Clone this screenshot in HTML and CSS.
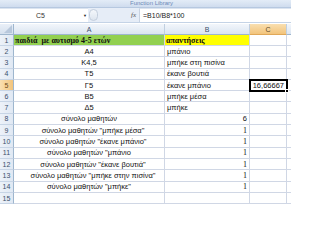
FILE: index.html
```html
<!DOCTYPE html>
<html>
<head>
<meta charset="utf-8">
<link rel="stylesheet" href="styles.css">
</head>
<body>
<div class="app">
  <div class="ribbon"><span class="group-label">Function Library</span></div>
  <div class="fbar">
    <div class="namebox"><span class="name">C5</span><span class="drop">&#9660;</span></div>
    <div class="grip"></div>
    <div class="fx">fx</div>
    <div class="formula">=B10/B8*100</div>
  </div>
  <div class="sheet">
    <div class="corner"><svg width="9" height="8" viewBox="0 0 9 8"><path d="M9 0 L9 8 L1 8 Z" fill="#b8c8dc"/></svg></div>
    <div class="ch">A</div>
    <div class="ch">B</div>
    <div class="ch sel">C</div>
    <div class="ch last"></div>

    <div class="rh">1</div>
    <div class="c green bold">παιδιά&nbsp; με αυτισμό 4-5 ετών</div>
    <div class="c yellow bold">απαντήσεις</div>
    <div class="c"></div>
    <div class="c"></div>

    <div class="rh">2</div>
    <div class="c mid">A4</div>
    <div class="c">μπάνιο</div>
    <div class="c"></div>
    <div class="c"></div>

    <div class="rh">3</div>
    <div class="c mid">K4,5</div>
    <div class="c">μπήκε στη πισίνα</div>
    <div class="c"></div>
    <div class="c"></div>

    <div class="rh">4</div>
    <div class="c mid">T5</div>
    <div class="c">έκανε βουτιά</div>
    <div class="c"></div>
    <div class="c"></div>

    <div class="rh sel">5</div>
    <div class="c mid">Γ5</div>
    <div class="c">έκανε μπάνιο</div>
    <div class="c right active">16,66667<span class="handle"></span></div>
    <div class="c"></div>

    <div class="rh">6</div>
    <div class="c mid">B5</div>
    <div class="c">μπήκε μέσα</div>
    <div class="c"></div>
    <div class="c"></div>

    <div class="rh">7</div>
    <div class="c mid">Δ5</div>
    <div class="c">μπήκε</div>
    <div class="c"></div>
    <div class="c"></div>

    <div class="rh">8</div>
    <div class="c mid">σύνολο μαθητών</div>
    <div class="c right">6</div>
    <div class="c"></div>
    <div class="c"></div>

    <div class="rh">9</div>
    <div class="c mid shift">σύνολο μαθητών "μπήκε μέσα"</div>
    <div class="c right serif">1</div>
    <div class="c"></div>
    <div class="c"></div>

    <div class="rh">10</div>
    <div class="c mid shift">σύνολο μαθητών "έκανε μπάνιο"</div>
    <div class="c right serif">1</div>
    <div class="c"></div>
    <div class="c"></div>

    <div class="rh">11</div>
    <div class="c mid">σύνολο μαθητών "μπάνιο</div>
    <div class="c right serif">1</div>
    <div class="c"></div>
    <div class="c"></div>

    <div class="rh">12</div>
    <div class="c mid shift">σύνολο μαθητών "έκανε βουτιά"</div>
    <div class="c right serif">1</div>
    <div class="c"></div>
    <div class="c"></div>

    <div class="rh">13</div>
    <div class="c mid shift">σύνολο μαθητών "μπήκε στην πισίνα"</div>
    <div class="c right serif">1</div>
    <div class="c"></div>
    <div class="c"></div>

    <div class="rh">14</div>
    <div class="c mid">σύνολο μαθητών "μπήκε"</div>
    <div class="c right serif">1</div>
    <div class="c"></div>
    <div class="c"></div>

    <div class="rh">15</div>
    <div class="c"></div>
    <div class="c"></div>
    <div class="c"></div>
    <div class="c"></div>
  </div>
</div>
</body>
</html>
```

FILE: styles.css
```css
html, body {
  margin: 0;
  padding: 0;
  background: #ffffff;
}
.app {
  width: 291px;
  height: 204px;
  overflow: hidden;
  font-family: "Liberation Sans", Arial, sans-serif;
  display: flex;
  flex-direction: column;
}
.ribbon {
  height: 8px;
  flex: none;
  background: linear-gradient(#e3ecf7, #cfdcee);
  border-bottom: 1px solid #b6c8e0;
  display: flex;
  align-items: center;
  padding-left: 130px;
  overflow: hidden;
  box-sizing: border-box;
}
.group-label {
  font-size: 6px;
  line-height: 7px;
  color: #6d8ab8;
  white-space: nowrap;
}
.fbar {
  height: 14px;
  flex: none;
  display: flex;
  align-items: stretch;
  background: #e6edf7;
  border-bottom: 1px solid #c4d3e6;
}
.namebox {
  width: 88px;
  background: #ffffff;
  border-top: 1px solid #dbe4f0;
  display: flex;
  align-items: center;
  box-sizing: border-box;
}
.name {
  font-size: 7px;
  color: #333;
  margin-left: 36px;
}
.drop {
  font-size: 4px;
  color: #222;
  margin-left: auto;
  margin-right: 1px;
}
.grip {
  width: 9px;
  height: 12px;
  margin: 1px 0 0 1px;
  border-radius: 6px;
  border: 1px solid #c3cedd;
  background: linear-gradient(#f4f7fb, #dde5ef);
  box-sizing: border-box;
}
.fx {
  width: 41px;
  font-family: "Liberation Serif", serif;
  font-style: italic;
  font-size: 7px;
  color: #555;
  display: flex;
  align-items: center;
  justify-content: flex-end;
  padding-right: 3px;
  box-sizing: border-box;
}
.formula {
  flex: 1;
  background: #ffffff;
  border-left: 1px solid #c8d3e2;
  border-top: 1px solid #dbe4f0;
  font-size: 7px;
  color: #222;
  display: flex;
  align-items: center;
  padding-left: 3px;
}
.sheet {
  margin-top: 1px;
  display: grid;
  grid-template-columns: 14px 151px 85px 37px 1fr;
  grid-template-rows: 11px 11px;
  grid-auto-rows: 11.3px;
  flex: none;
}
.corner {
  background: linear-gradient(#e9eff8, #d5e0ee);
  border-right: 1px solid #9eb6ce;
  border-bottom: 1px solid #9eb6ce;
  display: flex;
  align-items: flex-end;
  justify-content: flex-end;
  padding: 0 1px 1px 0;
  box-sizing: border-box;
}
.ch {
  background: linear-gradient(#f2f6fb, #dbe5f1);
  border-right: 1px solid #c0cfe0;
  border-bottom: 1px solid #9eb6ce;
  font-size: 7px;
  color: #3b4f6b;
  display: flex;
  align-items: center;
  justify-content: center;
  box-sizing: border-box;
}
.ch.sel {
  background: linear-gradient(#f9dfb0, #f2c47c);
  color: #5b4a2a;
  border-bottom-color: #e0a858;
}
.rh {
  background: linear-gradient(90deg, #edf2f9, #e0e8f3);
  border-right: 1px solid #9eb6ce;
  border-bottom: 1px solid #c7d5e6;
  font-size: 7px;
  color: #3b4f6b;
  display: flex;
  align-items: center;
  justify-content: center;
  box-sizing: border-box;
}
.rh.sel {
  background: linear-gradient(90deg, #f9dfb0, #f2c47c);
  color: #6b4a1a;
}
.c {
  border-right: 1px solid #d0d7e5;
  border-bottom: 1px solid #d0d7e5;
  font-size: 7.5px;
  color: #111;
  display: flex;
  align-items: center;
  padding: 0 2px;
  white-space: nowrap;
  box-sizing: border-box;
  position: relative;
}
.c.mid {
  justify-content: center;
}
.c.shift {
  padding-left: 10px;
}
.c.right {
  justify-content: flex-end;
}
.c.serif {
  font-family: "Liberation Serif", serif;
  font-size: 8px;
}
.c.bold {
  font-family: "Liberation Serif", serif;
  font-weight: bold;
  font-size: 8px;
  padding-left: 1px;
}
.green {
  background: #92d050;
}
.yellow {
  background: #ffff00;
}
.c.active {
  outline: 2px solid #000;
  outline-offset: -1px;
  z-index: 1;
}
.handle {
  position: absolute;
  right: -3px;
  bottom: -3px;
  width: 4px;
  height: 4px;
  background: #000;
  border: 1px solid #fff;
  box-sizing: border-box;
}
```
